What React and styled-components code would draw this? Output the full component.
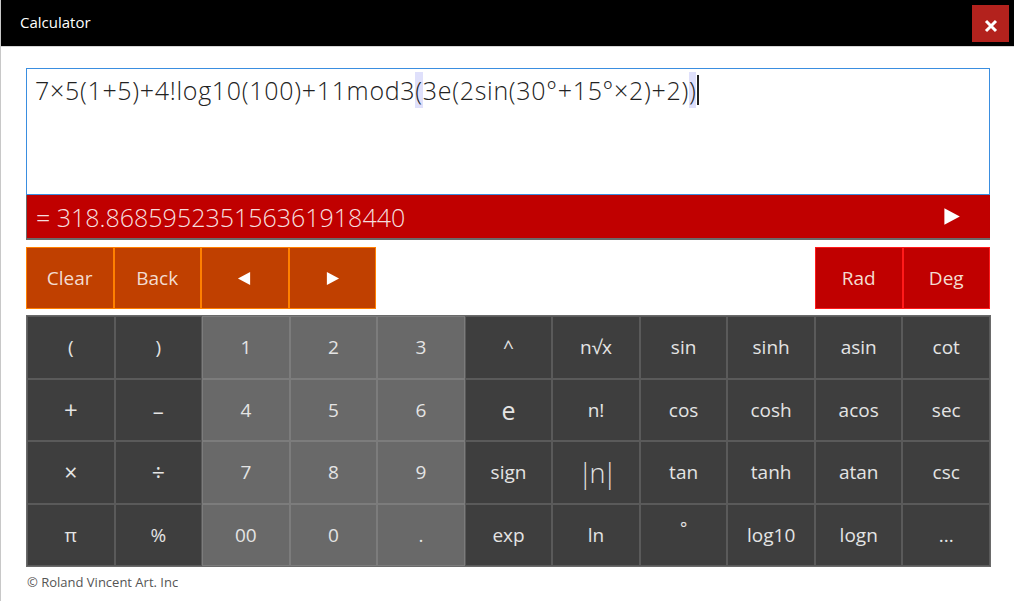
import styled, { createGlobalStyle } from "styled-components";

const GlobalStyle = createGlobalStyle`
  html, body {
    margin: 0;
    padding: 0;
    background: #ffffff;
  }
  * {
    box-sizing: border-box;
  }
`;

// 키패드 배열
const KEYS = [
  ["(", ")", "1", "2", "3", "^", "n√x", "sin", "sinh", "asin", "cot"],
  ["+", "–", "4", "5", "6", "e", "n!", "cos", "cosh", "acos", "sec"],
  ["×", "÷", "7", "8", "9", "sign", "|n|", "tan", "tanh", "atan", "csc"],
  ["π", "%", "00", "0", ".", "exp", "ln", "°", "log10", "logn", "..."],
];

const BIG = { e: 25, "|n|": 27, "+": 24, "–": 22, "×": 23, "÷": 23 };

const Triangle = ({ dir = "right", size = 16 }) => (
  <svg width={size} height={size} viewBox="0 0 16 16">
    {dir === "right" ? (
      <polygon points="2,1 15,8 2,15" fill="#ffffff" />
    ) : (
      <polygon points="14,1 1,8 14,15" fill="#ffffff" />
    )}
  </svg>
);

const App = () => {
  return (
    <Window>
      <GlobalStyle />
      <TitleBar>
        <Title>Calculator</Title>
        <CloseButton>
          <svg width="16" height="16" viewBox="0 0 16 16">
            <path d="M3 3 L13 13 M13 3 L3 13" stroke="#fff" strokeWidth="3" />
          </svg>
        </CloseButton>
      </TitleBar>
      <Main>
        <Editor>
          <Expression>
            7×5(1+5)+4!log10(100)+11mod3<Match>(</Match>3e(2sin(30°+15°×2)+2)
            <Match>)</Match>
            <Caret />
          </Expression>
        </Editor>
        <ResultBar>
          <ResultText>= 318.868595235156361918440</ResultText>
          <Triangle dir="right" size={19} />
        </ResultBar>
        <ControlRow>
          <Group>
            <ControlButton>Clear</ControlButton>
            <ControlButton>Back</ControlButton>
            <ControlButton>
              <Triangle dir="left" size={15} />
            </ControlButton>
            <ControlButton>
              <Triangle dir="right" size={15} />
            </ControlButton>
          </Group>
          <Group>
            <ControlButton $mode>Rad</ControlButton>
            <ControlButton $mode>Deg</ControlButton>
          </Group>
        </ControlRow>
        <Keypad>
          {KEYS.map((row, r) =>
            row.map((k, c) => (
              <Key
                key={`${r}-${c}`}
                $digit={c >= 2 && c <= 4}
                $size={BIG[k]}
                $tight={k === "|n|"}
              >
                {k === "°" ? <Degree>°</Degree> : k}
              </Key>
            ))
          )}
        </Keypad>
        <Footer>© Roland Vincent Art. Inc</Footer>
      </Main>
    </Window>
  );
};

export default App;

const Window = styled.div`
  width: 1014px;
  height: 601px;
  overflow: hidden;
  background: #ffffff;
  border-left: 1px solid #c8c8c8;
  font-family: "Open Sans", "Noto Sans", sans-serif;
`;

const TitleBar = styled.div`
  height: 47px;
  background: #000000;
  display: flex;
  align-items: flex-start;
  justify-content: space-between;
  padding: 0 5px 0 19px;
  border-bottom: 1px solid #d6d6d6;
`;

const Title = styled.div`
  color: #ffffff;
  font-size: 15px;
  line-height: 45px;
`;

const CloseButton = styled.div`
  width: 37px;
  height: 37px;
  margin-top: 5px;
  background: #b3221d;
  display: flex;
  align-items: center;
  justify-content: center;
  padding-top: 4px;
`;

const Main = styled.div`
  padding: 21px 24px 0 25px;
`;

const Editor = styled.div`
  height: 127px;
  border: 1px solid #3a8ee0;
  padding: 3px 8px;
`;

const Expression = styled.div`
  font-size: 25px;
  font-weight: 300;
  line-height: 36px;
  color: #222222;
  letter-spacing: 0.7px;
  white-space: nowrap;
  display: flex;
  align-items: center;
`;

const Match = styled.span`
  background: #dfe0fb;
`;

const Caret = styled.span`
  display: inline-block;
  width: 2px;
  height: 30px;
  background: #222222;
  margin-left: 1px;
`;

const ResultBar = styled.div`
  height: 45px;
  background: #c00000;
  border-left: 1px solid #6a6a6a;
  border-bottom: 2px solid #6a6a6a;
  display: flex;
  align-items: center;
  justify-content: space-between;
  padding: 0 29px 0 9px;
`;

const ResultText = styled.div`
  color: #f6dede;
  font-size: 25px;
  font-weight: 300;
  letter-spacing: 0;
`;

const ControlRow = styled.div`
  margin-top: 7px;
  height: 62px;
  display: flex;
  justify-content: space-between;
`;

const Group = styled.div`
  display: flex;
`;

const ControlButton = styled.div`
  width: 87.5px;
  height: 62px;
  display: flex;
  align-items: center;
  justify-content: center;
  font-size: 19px;
  color: #f3dcd0;
  background: ${(p) => (p.$mode ? "#c00000" : "#c04000")};
  border: 1px solid ${(p) => (p.$mode ? "#ff1a1a" : "#ff8000")};
`;

const Keypad = styled.div`
  margin-top: 6px;
  display: grid;
  grid-template-columns: repeat(11, 87.55px);
  grid-auto-rows: 62.5px;
  background: #5f5f5f;
  border: 1px solid #6a6a6a;
  width: max-content;
`;

const Key = styled.div`
  display: flex;
  align-items: center;
  justify-content: center;
  font-size: ${(p) => p.$size || 19}px;
  font-weight: ${(p) => (p.$tight ? 300 : 400)};
  letter-spacing: ${(p) => (p.$tight ? "-3px" : "0")};
  color: #e4e4e4;
  background: ${(p) => (p.$digit ? "#696969" : "#3e3e3e")};
  border: 1px solid ${(p) => (p.$digit ? "#7c7c7c" : "#5a5a5a")};
`;

const Degree = styled.span`
  font-size: 17px;
  position: relative;
  top: -7px;
`;

const Footer = styled.div`
  margin-top: 6px;
  font-size: 13px;
  color: #555555;
  padding-left: 1px;
`;
